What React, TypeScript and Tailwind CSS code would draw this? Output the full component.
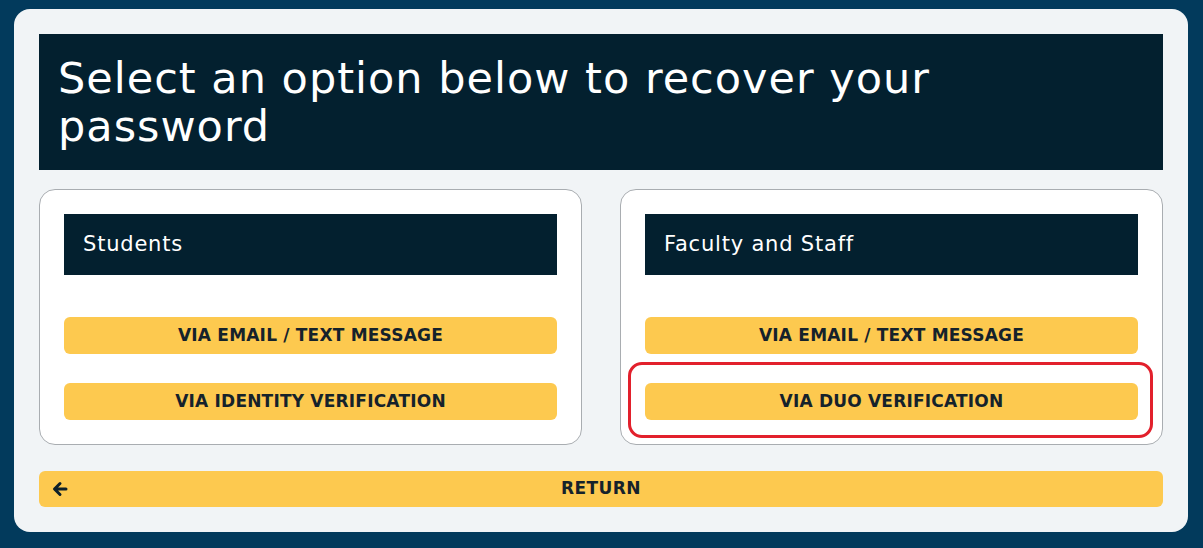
import type { ReactNode } from "react";

const font = { fontFamily: '"DejaVu Sans", "Open Sans", sans-serif' };

function ArrowLeft() {
  return (
    <svg viewBox="0 0 16 16" className="w-[16px] h-[16px]" fill="none" stroke="#0d1f29" strokeWidth={3} strokeLinecap="round" strokeLinejoin="round">
      <path d="M14 8H3M8 2.5L2.5 8L8 13.5" />
    </svg>
  );
}

function OptionButton({ children, highlight }: { children: ReactNode; highlight?: boolean }) {
  return (
    <div className="relative">
      <button className="w-full h-[37px] rounded-[6px] bg-[#fdc94f] text-[#15222b] font-bold text-[17px] tracking-[0.2px] uppercase">
        {children}
      </button>
      {highlight && (
        <div className="absolute -left-[17px] -top-[21px] -right-[15px] -bottom-[18px] rounded-[14px] border-[3px] border-[#e2202c] pointer-events-none" />
      )}
    </div>
  );
}

function Card({ title, children }: { title: string; children: ReactNode }) {
  return (
    <div className="flex-1 bg-white border border-[#a9adb1] rounded-[16px] p-6">
      <div className="h-[61px] bg-[#03202f] flex items-center px-[19px]">
        <h3 className="text-white text-[21px] tracking-[0.8px]">{title}</h3>
      </div>
      <div className="mt-[42px] flex flex-col gap-[29px]">{children}</div>
    </div>
  );
}

export default function App() {
  return (
    <div className="w-[1203px] h-[548px] bg-[#023a5c] pt-[9px] pl-[14px]" style={font}>
      <div className="w-[1174px] h-[523px] bg-[#f1f4f6] rounded-[16px] p-[25px]">
        {/* Heading */}
        <div className="h-[136px] bg-[#03202f] px-[19px] py-5">
          <h1 className="text-white text-[43px] leading-[48px] tracking-[1px]">
            Select an option below to recover your
            <br />
            password
          </h1>
        </div>

        {/* Cards */}
        <div className="mt-[19px] flex gap-[38px] h-[256px]">
          <Card title="Students">
            <OptionButton>Via Email / Text Message</OptionButton>
            <OptionButton>Via Identity Verification</OptionButton>
          </Card>
          <Card title="Faculty and Staff">
            <OptionButton>Via Email / Text Message</OptionButton>
            <OptionButton highlight>Via Duo Verification</OptionButton>
          </Card>
        </div>

        {/* Return */}
        <button className="mt-[26px] w-full h-[36px] rounded-[6px] bg-[#fdc94f] relative flex items-center justify-center text-[#15222b] font-bold text-[17px] tracking-[0.4px] uppercase">
          <span className="absolute left-[13px] top-1/2 -translate-y-1/2">
            <ArrowLeft />
          </span>
          Return
        </button>
      </div>
    </div>
  );
}
